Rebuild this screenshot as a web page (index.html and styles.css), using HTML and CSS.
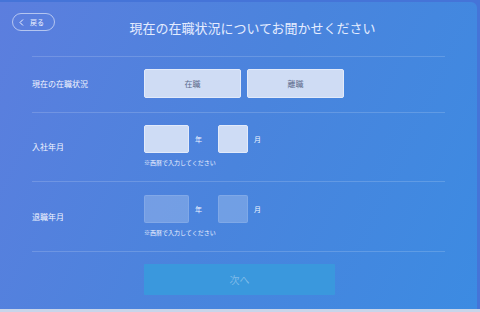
FILE: index.html
```html
<!DOCTYPE html>
<html lang="ja">
<head>
<meta charset="utf-8">
<link rel="stylesheet" href="styles.css">
</head>
<body>
<div class="card">
  <header class="header">
    <button class="back"><svg class="chev" width="5" height="7" viewBox="0 0 5 7"><path d="M4 0.5 L1 3.5 L4 6.5" fill="none" stroke="currentColor" stroke-width="1"/></svg><span>戻る</span></button>
    <h1 class="title">現在の在職状況についてお聞かせください</h1>
  </header>
  <div class="form">
    <div class="row row-status">
      <div class="label">現在の在職状況</div>
      <div class="controls">
        <div class="choices">
          <button class="choice">在職</button>
          <button class="choice">離職</button>
        </div>
      </div>
    </div>
    <div class="row row-date">
      <div class="label">入社年月</div>
      <div class="controls">
        <div class="date">
          <span class="box box-year"></span><span class="unit unit-year">年</span>
          <span class="box box-month"></span><span class="unit">月</span>
        </div>
        <div class="note">※西暦で入力してください</div>
      </div>
    </div>
    <div class="row row-date row-last">
      <div class="label">退職年月</div>
      <div class="controls">
        <div class="date">
          <span class="box box-year box-off"></span><span class="unit unit-year">年</span>
          <span class="box box-month box-off"></span><span class="unit unit-off">月</span>
        </div>
        <div class="note">※西暦で入力してください</div>
      </div>
    </div>
    <div class="row row-next">
      <div class="label"></div>
      <div class="controls">
        <button class="next">次へ</button>
      </div>
    </div>
  </div>
</div>
<div class="footer"></div>
</body>
</html>
```

FILE: styles.css
```css
* { box-sizing: border-box; margin: 0; padding: 0; }
html, body { width: 480px; height: 312px; overflow: hidden; }
body {
  background: #4574d8;
  font-family: "Noto Sans CJK JP", "Noto Sans", sans-serif;
  display: flex;
  flex-direction: column;
}
.card {
  margin: 2px 3px 0 0;
  height: 307px;
  border-radius: 0 6px 0 0;
  background: linear-gradient(115deg, #5c7ede 0%, #4a84dd 50%, #3c8be2 100%);
  display: flex;
  flex-direction: column;
}
.footer { flex: 1; background: #c9d5ea; }
.header {
  height: 54px;
  display: flex;
  align-items: flex-start;
  padding: 11px 27px 0 12px;
}
.back {
  height: 18px;
  width: 43px;
  border: 1px solid rgba(255,255,255,0.55);
  border-radius: 9px;
  background: transparent;
  color: #eef2ff;
  font-family: inherit;
  font-size: 7px;
  display: flex;
  align-items: center;
  gap: 6px;
  padding-left: 6px;
}
.chev { display: block; }
.title {
  flex: 1;
  margin-top: 6px;
  text-align: center;
  font-weight: 400;
  font-size: 13px;
  line-height: 18px;
  color: #e4ecff;
}
.form { padding-left: 32px; width: 445px; }
.row {
  display: flex;
  border-top: 1px solid rgba(255,255,255,0.16);
  align-items: center;
}
.label {
  width: 112px;
  flex: none;
  font-size: 8px;
  color: #f2f5ff;
}
.row-status { padding: 12px 0 14px; }
.choices { display: flex; gap: 6px; }
.choice {
  width: 97px;
  height: 29px;
  background: #cfdcf4;
  border: 1px solid #e2eafa;
  border-radius: 2px;
  font-family: inherit;
  font-size: 8px;
  color: #5d6c8c;
}
.row-date { padding: 12px 0 14px; }
.row-last { padding-top: 13px; }
.date { display: flex; align-items: center; }
.box {
  height: 28px;
  background: #cedcf5;
  border: 1px solid #e2eafa;
  border-radius: 2px;
}
.box-year { width: 45px; }
.box-month { width: 30px; }
.box-off { background: rgba(255,255,255,0.22); border-color: rgba(255,255,255,0.1); }
.unit { font-size: 7px; color: #f2f5ff; margin-left: 6px; }
.unit-year { margin-right: 16px; }
.note {
  margin-top: 6px;
  font-size: 6px;
  line-height: 8px;
  color: #eaf0ff;
}
.row-next { padding-top: 12px; }
.next {
  width: 191px;
  height: 31px;
  background: #3a98dd;
  border: none;
  border-radius: 1px;
  font-family: inherit;
  font-size: 10px;
  color: rgba(255,255,255,0.35);
}
```
